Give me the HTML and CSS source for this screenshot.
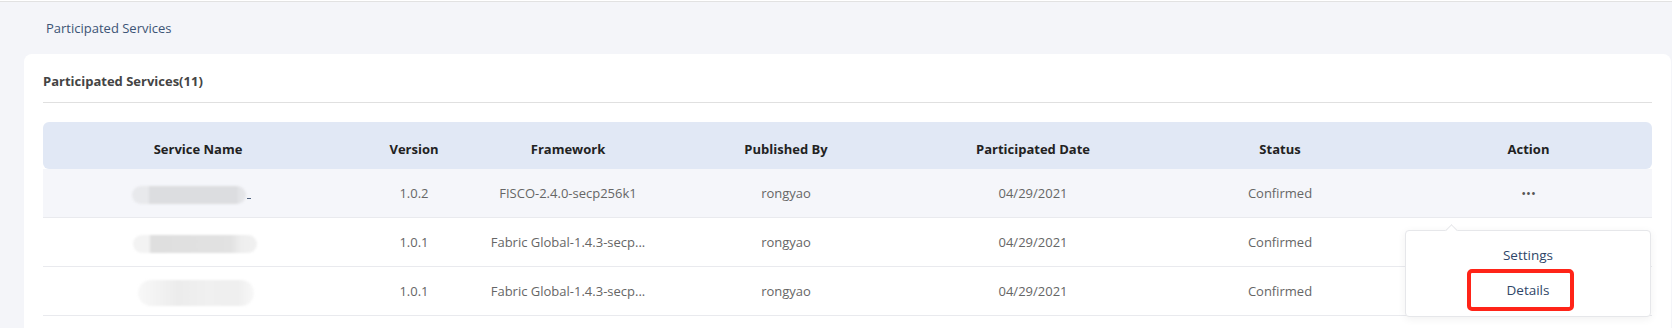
FILE: index.html
```html
<!DOCTYPE html>
<html lang="en">
<head>
    <meta charset="UTF-8">
    <meta name="viewport" content="width=device-width, initial-scale=1.0">
    <title>Participated Services</title>
    <link rel="stylesheet" href="styles.css">
</head>
<body>
    <div class="page">
        <div class="crumb">Participated Services</div>
        <div class="card">
            <div class="card-title">Participated Services(11)</div>
            <div class="table">
                <div class="row head">
                    <div class="cell">Service Name</div>
                    <div class="cell">Version</div>
                    <div class="cell">Framework</div>
                    <div class="cell">Published By</div>
                    <div class="cell">Participated Date</div>
                    <div class="cell">Status</div>
                    <div class="cell">Action</div>
                </div>
                <div class="row hover">
                    <div class="cell"><span class="blur blur-a"></span><span class="dash"></span></div>
                    <div class="cell">1.0.2</div>
                    <div class="cell">FISCO-2.4.0-secp256k1</div>
                    <div class="cell">rongyao</div>
                    <div class="cell">04/29/2021</div>
                    <div class="cell">Confirmed</div>
                    <div class="cell action">
                        <span class="dots">•••</span>
                        <div class="menu">
                            <div class="menu-item">Settings</div>
                            <div class="menu-item">Details</div>
                            <div class="mark"></div>
                        </div>
                    </div>
                </div>
                <div class="row">
                    <div class="cell"><span class="blur blur-b"></span></div>
                    <div class="cell">1.0.1</div>
                    <div class="cell" title="Fabric Global-1.4.3-secp256k1">Fabric Global-1.4.3-secp...</div>
                    <div class="cell">rongyao</div>
                    <div class="cell">04/29/2021</div>
                    <div class="cell">Confirmed</div>
                    <div class="cell"></div>
                </div>
                <div class="row">
                    <div class="cell"><span class="blur blur-c"></span></div>
                    <div class="cell">1.0.1</div>
                    <div class="cell" title="Fabric Global-1.4.3-secp256k1">Fabric Global-1.4.3-secp...</div>
                    <div class="cell">rongyao</div>
                    <div class="cell">04/29/2021</div>
                    <div class="cell">Confirmed</div>
                    <div class="cell"></div>
                </div>
            </div>
        </div>
    </div>
</body>
</html>
```

FILE: styles.css
```css
html {
    background-color: #fff;
}
body {
    margin: 0;
    font-family: "Open Sans", Arial, sans-serif;
    font-size: 13px;
    color: #666;
}
.page {
    margin-top: 1px;
    border-top: 1px solid #e2e2e2;
    background-color: #f4f5f9;
    height: 326px;
    overflow: hidden;
}
.crumb {
    padding: 16px 0 16px 46px;
    line-height: 20px;
    color: #3c5475;
}
.card {
    margin: 0 1px 0 24px;
    padding: 18px 19px 0;
    background-color: #fff;
    border-radius: 8px 8px 0 0;
    height: 300px;
}
.card-title {
    line-height: 18px;
    padding-bottom: 12px;
    border-bottom: 1px solid #e0e0e0;
    font-weight: bold;
    color: #444;
}
.table {
    margin-top: 19px;
}
.row {
    display: grid;
    grid-template-columns: 310px 122px 186px 250px 244px 250px 1fr;
    height: 48px;
    line-height: 48px;
    border-bottom: 1px solid #e9eaee;
}
.cell {
    padding: 0 6px;
    text-align: center;
    white-space: nowrap;
}
.row.head {
    height: 30px;
    line-height: 20px;
    padding-top: 17px;
    border-bottom: none;
    border-radius: 6px;
    background-color: #e1e8f5;
    font-weight: bold;
    color: #222;
}
.row.hover {
    background-color: #f5f6fa;
}
.cell.action {
    position: relative;
}
.dots {
    letter-spacing: 0;
    color: #555;
    font-size: 13px;
}
.blur {
    display: inline-block;
    vertical-align: middle;
    height: 18px;
    border-radius: 9px;
    filter: blur(1px);
}
.blur-a {
    width: 114px;
    margin-left: -14px;
    background: linear-gradient(90deg, #e8e9ec 0, #e8e9ec 16px, #dcdde0 18px, #dcdde0 104px, #e4e5e8 108px);
}
.blur-b {
    width: 124px;
    margin-left: -6px;
    background: linear-gradient(90deg, #f3f3f3 0, #f3f3f3 16px, #dfdfdf 18px, #e2e2e2 98px, #eeeeee 108px, #f1f1f1 124px);
}
.blur-c {
    width: 116px;
    height: 26px;
    margin-left: -4px;
    border-radius: 13px;
    background: linear-gradient(90deg, #f8f8f8 0, #f2f2f2 20px, #ececec 40px, #f0f0f0 70px, #efefef 100px, #f8f8f8 116px);
}
.dash {
    display: inline-block;
    vertical-align: middle;
    width: 4px;
    height: 1px;
    margin: 8px 0 0 1px;
    background-color: #50627e;
}
.menu {
    position: absolute;
    left: 0;
    top: 61px;
    width: 244px;
    padding: 7px 0 8px;
    background-color: #fff;
    border: 1px solid #e6e7ea;
    border-radius: 4px;
    box-shadow: 0 2px 8px rgba(0, 0, 0, 0.06);
    line-height: 35px;
    color: #2f4668;
    z-index: 2;
}
.menu::before {
    content: "";
    position: absolute;
    left: 41px;
    top: -5px;
    width: 8px;
    height: 8px;
    background-color: #fff;
    border-left: 1px solid #e6e7ea;
    border-top: 1px solid #e6e7ea;
    transform: rotate(45deg);
}
.menu-item {
    text-align: center;
    font-size: 13.5px;
}
.mark {
    position: absolute;
    left: 61px;
    top: 38px;
    width: 99px;
    height: 34px;
    border: 4px solid #ff2418;
    border-radius: 5px;
}
```
